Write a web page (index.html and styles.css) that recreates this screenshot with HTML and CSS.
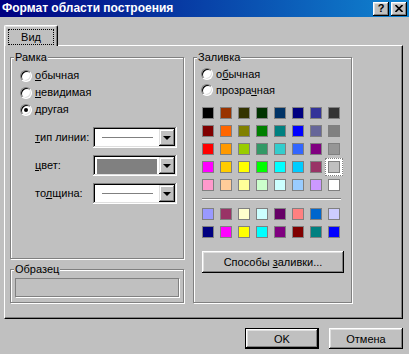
FILE: index.html
```html
<!DOCTYPE html>
<html lang="ru">
<head>
  <meta charset="UTF-8">
  <title>Формат области построения</title>
  <link rel="stylesheet" href="styles.css">
</head>
<body>
  <div class="window">
    <div class="titlebar">
      <span class="title">Формат области построения</span>
      <div class="title-buttons">
        <span class="tbtn help">?</span>
        <span class="tbtn">
          <svg width="8" height="7" viewBox="0 0 8 7"><path d="M0.5 0 L7.5 7 M7.5 0 L0.5 7" stroke="#000" stroke-width="1.6"/></svg>
        </span>
      </div>
    </div>

    <div class="tabs">
      <div class="tab"><span class="tab-focus">Вид</span></div>
    </div>

    <div class="panel">
      <div class="col-left">
        <fieldset class="group frame">
          <legend>Рамка</legend>
          <div class="group-body">
            <div class="radio"><span class="radio-dot"></span><span><u>о</u>бычная</span></div>
            <div class="radio"><span class="radio-dot"></span><span><u>н</u>евидимая</span></div>
            <div class="radio"><span class="radio-dot checked"></span><span>другая</span></div>

            <div class="props">
              <span class="prop-label"><u>т</u>ип линии:</span>
              <div class="combo">
                <div class="combo-value"><span class="line-sample"></span></div>
                <span class="combo-btn"><span class="arrow"></span></span>
              </div>

              <span class="prop-label"><u>ц</u>вет:</span>
              <div class="combo">
                <div class="combo-value"><span class="color-sample"></span></div>
                <span class="combo-btn"><span class="arrow"></span></span>
              </div>

              <span class="prop-label">то<u>л</u>щина:</span>
              <div class="combo">
                <div class="combo-value"><span class="line-sample"></span></div>
                <span class="combo-btn"><span class="arrow"></span></span>
              </div>
            </div>
          </div>
        </fieldset>

        <fieldset class="group sample">
          <legend>Образец</legend>
          <div class="sample-box"></div>
        </fieldset>
      </div>

      <fieldset class="group fill">
        <legend>Заливка</legend>
        <div class="group-body fill-body">
          <div class="radio"><span class="radio-dot"></span><span>о<u>б</u>ычная</span></div>
          <div class="radio"><span class="radio-dot"></span><span>прозра<u>ч</u>ная</span></div>

          <div class="palette">
            <span class="swatch" style="background:#000000"></span>
            <span class="swatch" style="background:#993300"></span>
            <span class="swatch" style="background:#333300"></span>
            <span class="swatch" style="background:#003300"></span>
            <span class="swatch" style="background:#003366"></span>
            <span class="swatch" style="background:#000080"></span>
            <span class="swatch" style="background:#333399"></span>
            <span class="swatch" style="background:#333333"></span>

            <span class="swatch" style="background:#800000"></span>
            <span class="swatch" style="background:#ff6600"></span>
            <span class="swatch" style="background:#808000"></span>
            <span class="swatch" style="background:#008000"></span>
            <span class="swatch" style="background:#008080"></span>
            <span class="swatch" style="background:#0000ff"></span>
            <span class="swatch" style="background:#666699"></span>
            <span class="swatch" style="background:#808080"></span>

            <span class="swatch" style="background:#ff0000"></span>
            <span class="swatch" style="background:#ff9900"></span>
            <span class="swatch" style="background:#99cc00"></span>
            <span class="swatch" style="background:#339966"></span>
            <span class="swatch" style="background:#33cccc"></span>
            <span class="swatch" style="background:#3366ff"></span>
            <span class="swatch" style="background:#800080"></span>
            <span class="swatch" style="background:#969696"></span>

            <span class="swatch" style="background:#ff00ff"></span>
            <span class="swatch" style="background:#ffcc00"></span>
            <span class="swatch" style="background:#ffff00"></span>
            <span class="swatch" style="background:#00ff00"></span>
            <span class="swatch" style="background:#00ffff"></span>
            <span class="swatch" style="background:#00ccff"></span>
            <span class="swatch" style="background:#993366"></span>
            <span class="swatch selected" style="background:#c0c0c0"></span>

            <span class="swatch" style="background:#ff99cc"></span>
            <span class="swatch" style="background:#ffcc99"></span>
            <span class="swatch" style="background:#ffff99"></span>
            <span class="swatch" style="background:#ccffcc"></span>
            <span class="swatch" style="background:#ccffff"></span>
            <span class="swatch" style="background:#99ccff"></span>
            <span class="swatch" style="background:#cc99ff"></span>
            <span class="swatch" style="background:#ffffff"></span>
          </div>

          <div class="separator"></div>

          <div class="palette">
            <span class="swatch" style="background:#9999ff"></span>
            <span class="swatch" style="background:#993366"></span>
            <span class="swatch" style="background:#ffffcc"></span>
            <span class="swatch" style="background:#ccffff"></span>
            <span class="swatch" style="background:#660066"></span>
            <span class="swatch" style="background:#ff8080"></span>
            <span class="swatch" style="background:#0066cc"></span>
            <span class="swatch" style="background:#ccccff"></span>

            <span class="swatch" style="background:#000080"></span>
            <span class="swatch" style="background:#ff00ff"></span>
            <span class="swatch" style="background:#ffff00"></span>
            <span class="swatch" style="background:#00ffff"></span>
            <span class="swatch" style="background:#800080"></span>
            <span class="swatch" style="background:#800000"></span>
            <span class="swatch" style="background:#008080"></span>
            <span class="swatch" style="background:#0000ff"></span>
          </div>

          <button class="btn fill-effects">Способы <u>з</u>аливки...</button>
        </div>
      </fieldset>
    </div>

    <div class="footer">
      <button class="btn default">OK</button>
      <button class="btn">Отмена</button>
    </div>
  </div>
</body>
</html>
```

FILE: styles.css
```css
/* Base */
* {
  box-sizing: border-box;
}

body {
  margin: 0;
  background: #c0c0c0;
  font-family: "Liberation Sans", Arial, sans-serif;
  font-size: 11px;
  line-height: 13px;
  color: #000;
}

u {
  text-decoration-thickness: 1px;
  text-underline-offset: 1px;
}

.window {
  width: 409px;
  height: 354px;
  overflow: hidden;
}

/* Title bar */
.titlebar {
  height: 17px;
  display: flex;
  align-items: center;
  justify-content: space-between;
  padding: 0 2px 0 2px;
  background: linear-gradient(to right, #000080, #1084d0);
}

.title {
  color: #fff;
  font-weight: bold;
  font-size: 12px;
}

.title-buttons {
  display: flex;
  gap: 2px;
}

.tbtn {
  width: 16px;
  height: 14px;
  display: flex;
  align-items: center;
  justify-content: center;
  background: #c0c0c0;
  box-shadow: inset -1px -1px #000, inset 1px 1px #fff, inset -2px -2px #808080, inset 2px 2px #dfdfdf;
}

.tbtn.help {
  font-weight: bold;
  font-size: 11px;
}

/* Tab */
.tabs {
  display: flex;
  padding: 8px 0 0 4px;
}

.tab {
  position: relative;
  z-index: 1;
  width: 54px;
  height: 21px;
  margin-bottom: -1px;
  padding: 3px 0 0 3px;
  background: #c0c0c0;
  border-top: 1px solid #fff;
  border-left: 1px solid #fff;
  border-right: 1px solid #000;
  border-radius: 2px 2px 0 0;
  box-shadow: inset -1px 0 #808080, inset 1px 1px #dfdfdf;
}

.tab-focus {
  display: flex;
  align-items: center;
  justify-content: center;
  width: 46px;
  height: 16px;
  border: 1px dotted #000;
}

/* Panel */
.panel {
  display: flex;
  gap: 9px;
  width: 399px;
  height: 274px;
  margin-left: 4px;
  padding: 5px 0 15px 5px;
  border-top: 1px solid #fff;
  border-left: 1px solid #fff;
  border-right: 1px solid #000;
  border-bottom: 1px solid #000;
  box-shadow: inset -1px -1px #808080;
}

.col-left {
  display: flex;
  flex-direction: column;
  gap: 4px;
  width: 174px;
}

/* Group boxes */
.group {
  margin: 0;
  padding: 0;
  min-inline-size: 0;
  border: 1px solid #808080;
  box-shadow: inset 1px 1px #fff, 1px 1px #fff;
}

.group legend {
  margin-left: 3px;
  padding: 0 1px;
  background: #c0c0c0;
}

.frame {
  flex: 1;
}

.group-body {
  padding: 3px 0 0 9px;
}

.fill {
  width: 159px;
}

.fill-body {
  padding: 2px 0 0 7px;
}

/* Radio buttons */
.radio {
  display: flex;
  align-items: center;
  gap: 3px;
  height: 17px;
}

.fill-body .radio {
  height: 16px;
}

.radio-dot {
  position: relative;
  width: 12px;
  height: 12px;
  border-radius: 50%;
  background: #fff;
  border: 1px solid;
  border-color: #808080 #fff #fff #808080;
  box-shadow: inset 1px 1px #000, inset -1px -1px #dfdfdf;
}

.radio-dot.checked::after {
  content: '';
  position: absolute;
  left: 3px;
  top: 3px;
  width: 4px;
  height: 4px;
  border-radius: 50%;
  background: #000;
}

/* Border properties */
.props {
  display: grid;
  grid-template-columns: 58px 84px;
  grid-auto-rows: 21px;
  row-gap: 7px;
  align-items: center;
  margin: 9px 0 0 15px;
}

.combo {
  display: flex;
  height: 21px;
  padding: 2px;
  background: #fff;
  box-shadow: inset -1px -1px #fff, inset 1px 1px #808080, inset -2px -2px #dfdfdf, inset 2px 2px #000;
}

.combo-value {
  flex: 1;
  display: flex;
  align-items: center;
  padding: 0 6px 0 7px;
}

.line-sample {
  flex: 1;
  height: 1px;
  background: #808080;
}

.color-sample {
  flex: 1;
  align-self: stretch;
  margin: 2px -4px 0 -5px;
  background: #808080;
}

.combo-btn {
  display: flex;
  align-items: center;
  justify-content: center;
  width: 16px;
  background: #c0c0c0;
  box-shadow: inset -1px -1px #000, inset 1px 1px #dfdfdf, inset -2px -2px #808080, inset 2px 2px #fff;
}

.arrow {
  border-left: 4px solid transparent;
  border-right: 4px solid transparent;
  border-top: 4px solid #000;
}

/* Sample */
.sample-box {
  height: 19px;
  margin: 2px 4px 5px 4px;
  border: 1px solid #808080;
  box-shadow: 1px 1px #fff;
}

/* Palette */
.palette {
  display: grid;
  grid-template-columns: repeat(8, 12px);
  grid-auto-rows: 12px;
  gap: 6px;
  margin: 9px 0 0 1px;
}

.swatch {
  border: 1px solid #808080;
}

.swatch.selected {
  outline: 1px dotted #808080;
  outline-offset: 2px;
  box-shadow: 0 0 0 3px #fff;
}

.separator {
  width: 139px;
  height: 2px;
  margin: 7px 0 -1px 1px;
  border-top: 1px solid #808080;
  border-bottom: 1px solid #fff;
}

/* Buttons */
.btn {
  height: 21px;
  padding: 0;
  font-family: inherit;
  font-size: 11px;
  color: #000;
  background: #c0c0c0;
  border: none;
  box-shadow: inset -1px -1px #000, inset 1px 1px #fff, inset -2px -2px #808080, inset 2px 2px #dfdfdf;
}

.fill-effects {
  width: 142px;
  height: 22px;
  margin: 13px 0 0 1px;
}

.footer {
  display: flex;
  justify-content: flex-end;
  gap: 10px;
  padding: 9px 6px 0 0;
}

.footer .btn {
  width: 74px;
}

.btn.default {
  border: 1px solid #000;
}
```
